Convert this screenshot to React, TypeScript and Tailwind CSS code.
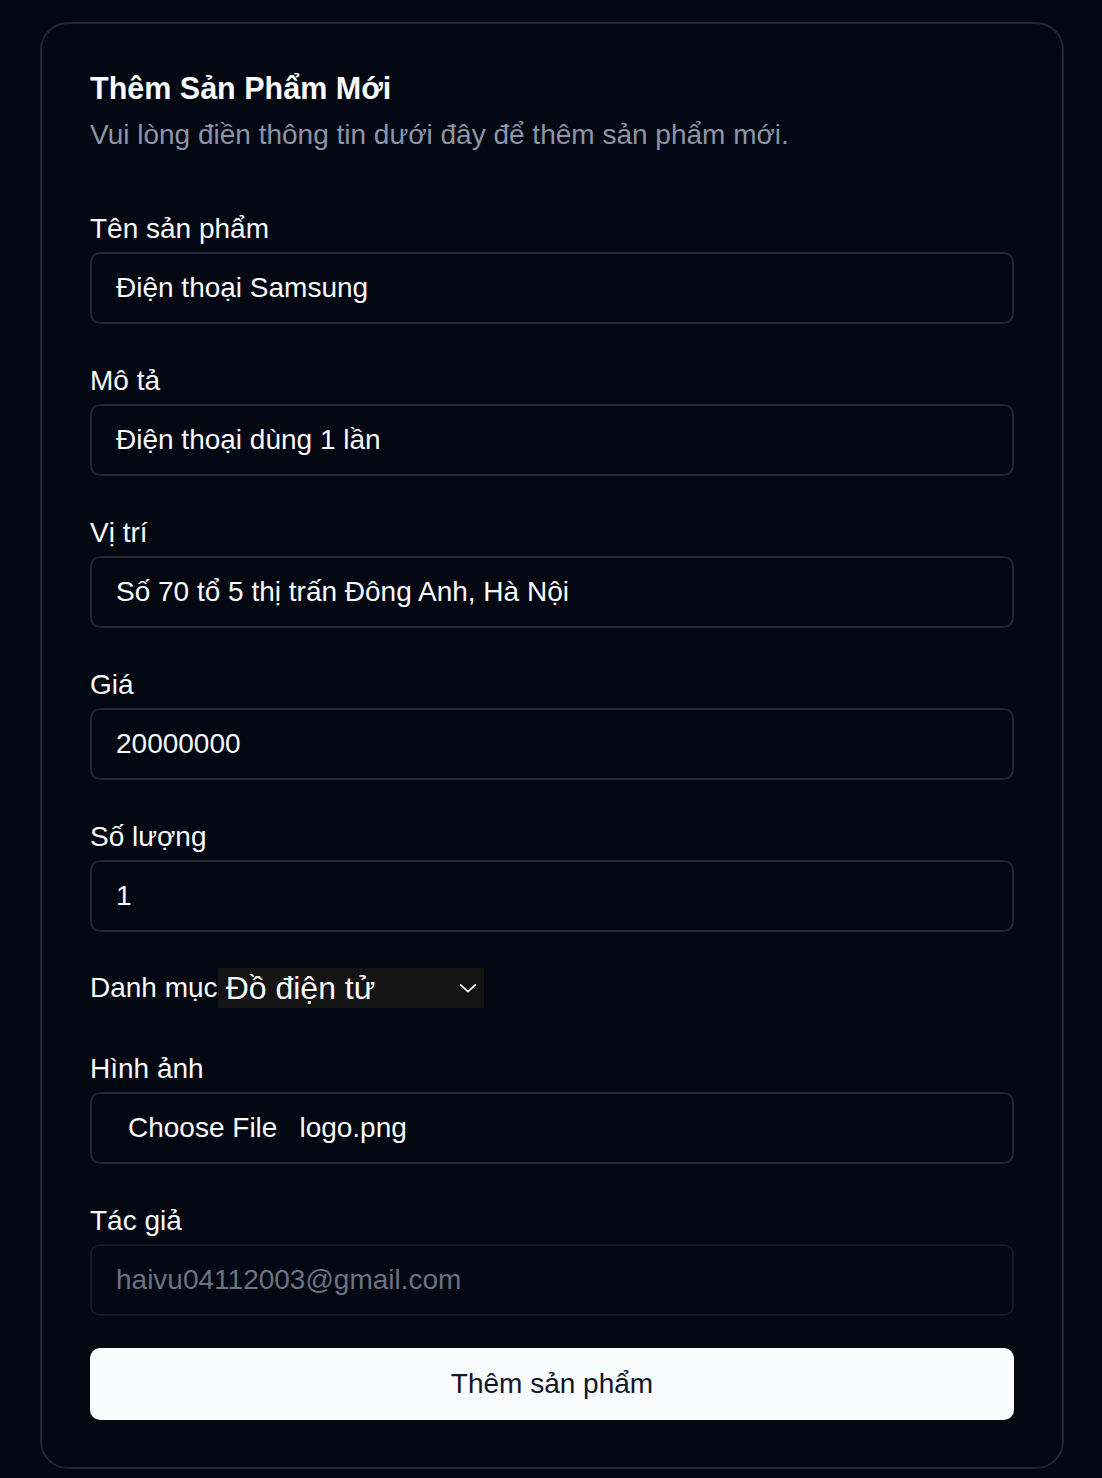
import React from 'react'

const labelCls = "block text-[28px] leading-[36px] text-[#f8fafc]"
const inputCls =
  "mt-[5px] flex h-[72px] w-full items-center rounded-[10px] border-2 border-[#1f2735] bg-transparent px-[24px] text-[28px] text-[#f8fafc] outline-none"

function Field({ label, value, className = "" }: { label: string; value: string; className?: string }) {
  return (
    <div className={className}>
      <label className={labelCls}>{label}</label>
      <input className={inputCls} defaultValue={value} />
    </div>
  )
}

export default function App() {
  return (
    <div
      className="min-h-screen bg-[#030712] pl-10 pt-[22px] pb-[8px]"
      style={{ fontFamily: '"Liberation Sans", Arial, sans-serif' }}
    >
      <div className="w-[1024px] rounded-[28px] border-2 border-[#1f2735] px-12 pt-12 pb-[47px]">
        <h1 className="text-[30.5px] font-bold leading-[32px] text-[#f8fafc]">Thêm Sản Phẩm Mới</h1>
        <p className="mt-[13px] text-[28px] leading-[36px] text-[#8b95a7]">
          Vui lòng điền thông tin dưới đây để thêm sản phẩm mới.
        </p>

        <form className="mt-[58px]">
          <Field label="Tên sản phẩm" value="Điện thoại Samsung" />
          <Field className="mt-[39px]" label="Mô tả" value="Điện thoại dùng 1 lần" />
          <Field className="mt-[39px]" label="Vị trí" value="Số 70 tổ 5 thị trấn Đông Anh, Hà Nội" />
          <Field className="mt-[39px]" label="Giá" value="20000000" />
          <Field className="mt-[39px]" label="Số lượng" value="1" />

          <div className="mt-[36px] flex h-[40px] items-center">
            <label className="text-[28px] leading-[36px] text-[#f8fafc]">Danh mục</label>
            <div className="flex h-[40px] w-[266px] items-center justify-between bg-[#141414] pl-[8px] pr-[5px] text-[32px] text-[#f8fafc]">
              <span className="leading-[40px]">Đồ điện tử</span>
              <svg width="22" height="22" viewBox="0 0 24 24" fill="none" stroke="#f8fafc" strokeWidth="1.8" strokeLinecap="round" strokeLinejoin="round">
                <path d="M4 8.5l8 7.5 8-7.5" />
              </svg>
            </div>
          </div>

          <div className="mt-[43px]">
            <label className={labelCls}>Hình ảnh</label>
            <div className={inputCls}>
              <span className="pl-[12px]">Choose File</span>
              <span className="pl-[22px]">logo.png</span>
            </div>
          </div>

          <div className="mt-[39px]">
            <label className={labelCls}>Tác giả</label>
            <input
              className="mt-[5px] flex h-[72px] w-full items-center rounded-[10px] border-2 border-[#141925] bg-transparent px-[24px] text-[28px] text-[#6b7280] outline-none"
              defaultValue="haivu04112003@gmail.com"
              disabled
            />
          </div>

          <button
            type="button"
            className="mt-[32px] h-[72px] w-full rounded-[10px] bg-[#f8fafc] text-[28px] text-[#0f172a]"
          >
            Thêm sản phẩm
          </button>
        </form>
      </div>
    </div>
  )
}
